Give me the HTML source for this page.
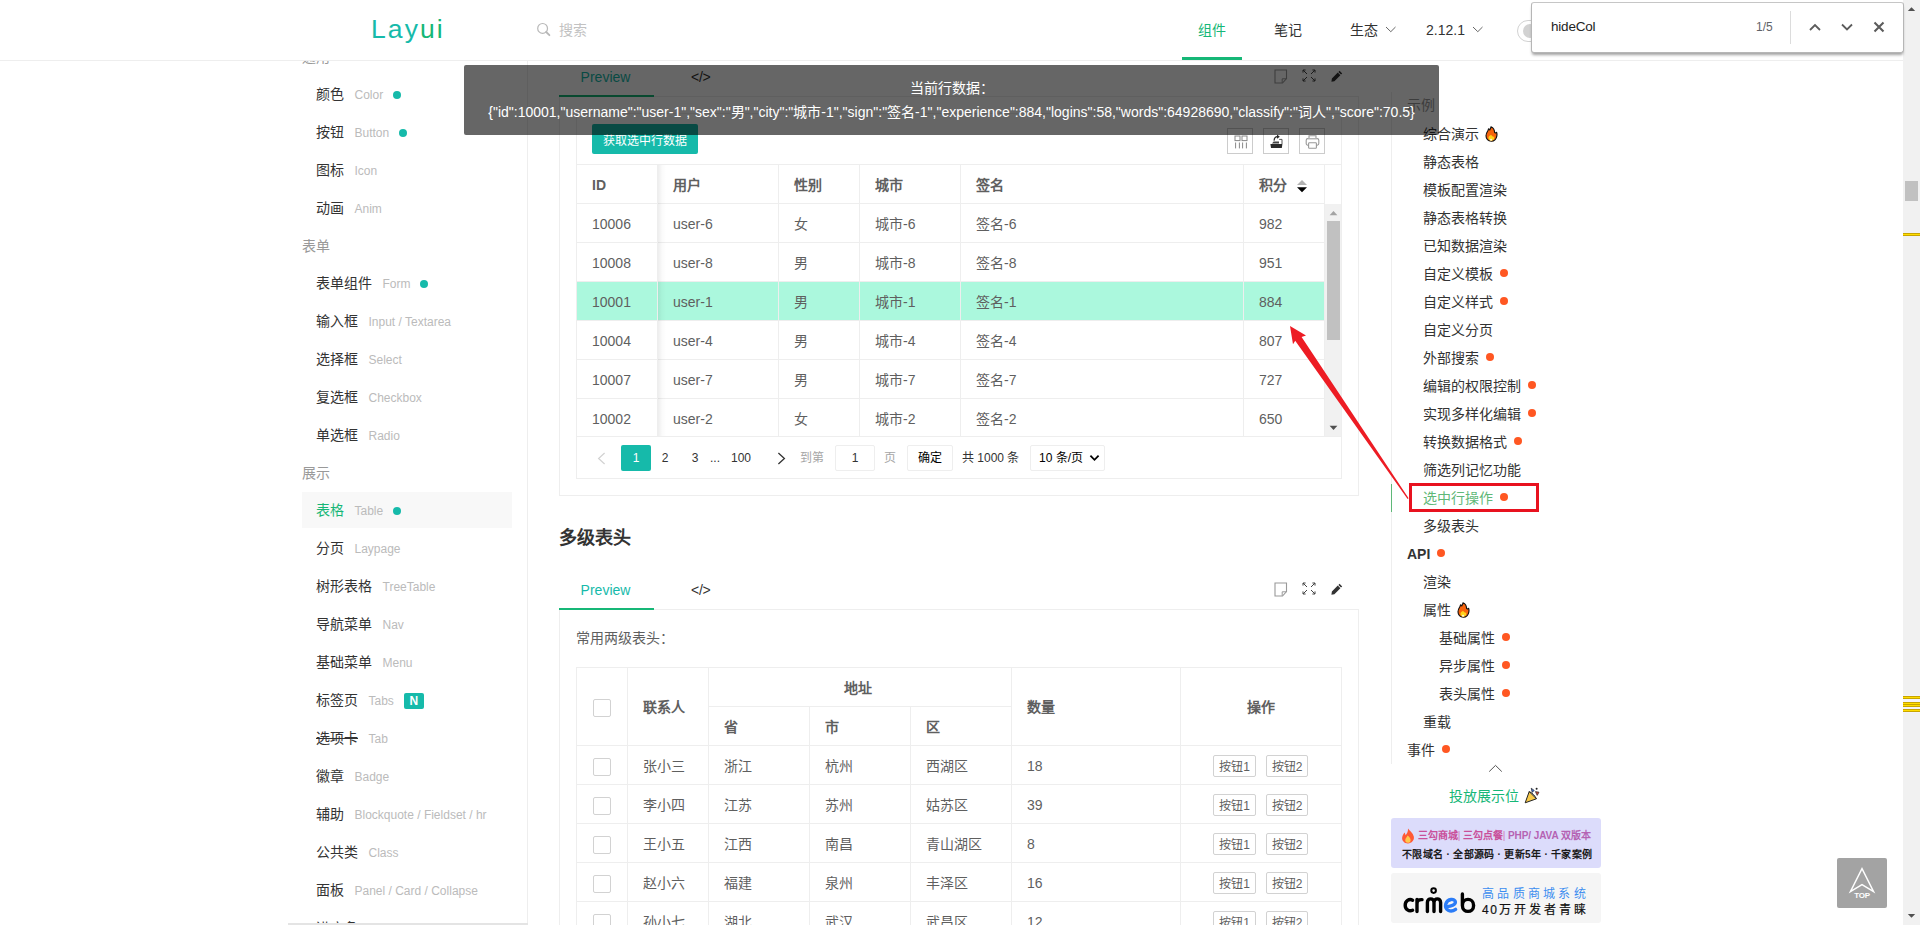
<!DOCTYPE html>
<html lang="zh-CN">
<head>
<meta charset="utf-8">
<title>Layui table</title>
<style>
*{box-sizing:border-box;margin:0;padding:0}
html,body{width:1920px;height:925px;overflow:hidden;background:#fff}
body{font-family:"Liberation Sans",sans-serif;font-size:14px;color:#333;position:relative;line-height:1}
.a{position:absolute}
.nw{white-space:nowrap}
svg{display:block;overflow:visible}

/* header */
#hd{position:absolute;left:0;top:0;width:1903px;height:61px;background:#fff;border-bottom:1px solid #eee;z-index:20}
#logo{position:absolute;left:371px;top:9px;height:40px;line-height:40px;font-size:26.5px;letter-spacing:2.1px;color:#16baaa;white-space:nowrap}
#logo i{font-style:normal;color:#16b777}
.nav{position:absolute;top:0;height:60px;line-height:60px;font-size:14px;color:#333;white-space:nowrap}

/* left side */
#side{position:absolute;left:290px;top:0;width:238px;height:925px;border-right:1px solid #eee;overflow:hidden;z-index:1}
#side .ls{position:absolute;left:12px;top:38px;width:210px}
.lab{height:37px;line-height:39px;color:#999;white-space:nowrap}
.row{height:38px;padding:1px 0}
.row div{height:36px;line-height:36px;padding-left:14px;white-space:nowrap;color:#333}
.row.on div{background:#f8f8f8;color:#16b777}
.row span{font-size:12px;color:#bbb;margin-left:10.5px}
.row b{display:inline-block;width:8px;height:8px;border-radius:50%;background:#16baaa;margin-left:9.5px;vertical-align:middle;position:relative;top:0}
.row em{display:inline-block;font-style:normal;font-weight:bold;font-size:12px;color:#fff;background:#16baaa;width:20px;height:16px;line-height:16px;text-align:center;border-radius:2px;margin-left:10px;vertical-align:middle;position:relative;top:0}
.row s{text-decoration:line-through}

/* page scrollbar */
#sb{position:absolute;left:1903px;top:0;width:17px;height:925px;background:#f1f1f1;z-index:30}
.ym{position:absolute;left:0;width:17px;height:3px;background:#ffdd00;border-top:1px solid #c8a500;border-bottom:1px solid #c8a500}

/* find bar */
#find{position:absolute;left:1531px;top:2px;width:373px;height:51px;background:#fff;border:1px solid #b6b6b6;border-top-color:#c6c6c6;border-radius:3px;box-shadow:0 3px 3px -1px rgba(0,0,0,.37);z-index:40}

/* main */
.card{position:absolute;left:559px;width:800px;border:1px solid #eee}
.tabt{position:absolute;left:558px;width:95px;height:38px;line-height:36px;text-align:center;color:#16baaa;font-size:14px}
.tabu{position:absolute;left:559px;width:95px;height:2px;background:#16b777}
.tabc{position:absolute;left:691px;height:38px;line-height:36px;font-size:14px;color:#333;letter-spacing:-.3px}
.tv{position:absolute;left:576px;width:766px;border:1px solid #eee}
.c{position:absolute;height:38px;line-height:40px;padding-left:15px;white-space:nowrap;color:#5f5f5f;font-size:14px;border-right:1px solid #eee;border-bottom:1px solid #eee;box-sizing:content-box}
.h{font-weight:bold}
.pg{position:absolute;top:0;height:26px;line-height:26px;font-size:12px;color:#333;white-space:nowrap}
.cb{position:absolute;left:16px;width:18px;height:18px;border:1px solid #d2d2d2;border-radius:2px;background:#fff}
.xs{position:absolute;height:22px;line-height:22px;border:1px solid #d2d2d2;border-radius:2px;font-size:12px;color:#5f5f5f;text-align:center;background:#fff;white-space:nowrap}

/* right side */
.ri{position:absolute;height:28px;line-height:28px;white-space:nowrap;color:#333;font-size:14px}
.ri b{display:inline-block;width:8px;height:8px;border-radius:50%;background:#ff5722;margin-left:7px;vertical-align:middle;position:relative;top:-2px}

/* fixed-width CJK runs (keeps following Latin text / dots in place for any fallback font) */
u,s{display:inline-block;white-space:nowrap;text-align:justify;text-align-last:justify}
u{text-decoration:none}
</style>
</head>
<body>

<!-- ============ HEADER ============ -->
<div id="hd">
  <div id="logo">Lay<i>ui</i></div>
  <svg class="a" style="left:536px;top:22px" width="16" height="16" viewBox="0 0 16 16"><circle cx="6.6" cy="6.4" r="4.9" fill="none" stroke="#b8b8b8" stroke-width="1.2"/><path d="M10.2 10 L13.4 13.2" stroke="#b8b8b8" stroke-width="1.8" stroke-linecap="round"/></svg>
  <div class="nav" style="left:559px;color:#c2c2c2"><u style="width:28px">搜索</u></div>

  <div class="nav" style="left:1198px;color:#16b777"><u style="width:28px">组件</u></div>
  <div class="a" style="left:1182px;top:57px;width:60px;height:3px;background:#16b777"></div>
  <div class="nav" style="left:1274px"><u style="width:28px">笔记</u></div>
  <div class="nav" style="left:1350px"><u style="width:28px">生态</u></div>
  <svg class="a" style="left:1385px;top:26px" width="12" height="8" viewBox="0 0 12 8"><path d="M1 1 L5.8 5.7 L10.5 1" fill="none" stroke="#666" stroke-width="1"/></svg>
  <div class="nav" style="left:1426px">2.12.1</div>
  <svg class="a" style="left:1472px;top:26px" width="12" height="8" viewBox="0 0 12 8"><path d="M1 1 L5.8 5.7 L10.5 1" fill="none" stroke="#666" stroke-width="1"/></svg>
  <!-- switch -->
  <div class="a" style="left:1517px;top:20px;width:44px;height:22px;border:1px solid #d2d2d2;border-radius:11px;background:#fff"></div>
  <div class="a" style="left:1523px;top:24px;width:14px;height:14px;border-radius:50%;background:#d2d2d2"></div>
</div>

<!-- ============ FIND BAR ============ -->
<div id="find">
  <div class="a nw" style="left:19px;top:0;height:48px;line-height:48px;font-size:13.5px;letter-spacing:-.2px;color:#222">hideCol</div>
  <div class="a nw" style="left:224px;top:0;height:48px;line-height:48px;font-size:12px;color:#5f6368">1/5</div>
  <div class="a" style="left:258px;top:8px;width:1px;height:33px;background:#dcdcdc"></div>
  <svg class="a" style="left:276px;top:19px" width="14" height="10" viewBox="0 0 14 10"><path d="M2 8 L7 3 L12 8" fill="none" stroke="#5c5c5c" stroke-width="1.8"/></svg>
  <svg class="a" style="left:308px;top:19px" width="14" height="10" viewBox="0 0 14 10"><path d="M2 2.5 L7 7.5 L12 2.5" fill="none" stroke="#5c5c5c" stroke-width="1.8"/></svg>
  <svg class="a" style="left:340px;top:17px" width="14" height="14" viewBox="0 0 14 14"><path d="M2.5 2.5 L11.5 11.5 M11.5 2.5 L2.5 11.5" fill="none" stroke="#5c5c5c" stroke-width="2.1"/></svg>
</div>

<!-- ============ PAGE SCROLLBAR ============ -->
<div id="sb">
  <svg class="a" style="left:4px;top:6px" width="9" height="6" viewBox="0 0 9 6"><path d="M0.8 5 L4.5 1.2 L8.2 5 Z" fill="#505050"/></svg>
  <div class="a" style="left:2px;top:181px;width:13px;height:20px;background:#c1c1c1"></div>
  <div class="ym" style="top:233px"></div>
  <div class="a" style="left:0;top:695px;width:17px;height:18px;background:#f4f4fb"></div>
  <div class="ym" style="top:696px"></div>
  <div class="ym" style="top:702px"></div>
  <div class="ym" style="top:704px"></div>
  <div class="ym" style="top:709px"></div>
  <svg class="a" style="left:4px;top:913px" width="9" height="6" viewBox="0 0 9 6"><path d="M0.8 1 L8.2 1 L4.5 4.8 Z" fill="#505050"/></svg>
</div>

<!-- ============ LEFT SIDEBAR ============ -->
<div id="side">
  <div class="ls">
    <div class="lab"><u style="width:28px">通用</u></div>
    <div class="row"><div><u style="width:28px">颜色</u><span>Color</span><b></b></div></div>
    <div class="row"><div><u style="width:28px">按钮</u><span>Button</span><b></b></div></div>
    <div class="row"><div><u style="width:28px">图标</u><span>Icon</span></div></div>
    <div class="row"><div><u style="width:28px">动画</u><span>Anim</span></div></div>
    <div class="lab"><u style="width:28px">表单</u></div>
    <div class="row"><div><u style="width:56px">表单组件</u><span>Form</span><b></b></div></div>
    <div class="row"><div><u style="width:42px">输入框</u><span>Input / Textarea</span></div></div>
    <div class="row"><div><u style="width:42px">选择框</u><span>Select</span></div></div>
    <div class="row"><div><u style="width:42px">复选框</u><span>Checkbox</span></div></div>
    <div class="row"><div><u style="width:42px">单选框</u><span>Radio</span></div></div>
    <div class="lab"><u style="width:28px">展示</u></div>
    <div class="row on"><div><u style="width:28px">表格</u><span>Table</span><b></b></div></div>
    <div class="row"><div><u style="width:28px">分页</u><span>Laypage</span></div></div>
    <div class="row"><div><u style="width:56px">树形表格</u><span>TreeTable</span></div></div>
    <div class="row"><div><u style="width:56px">导航菜单</u><span>Nav</span></div></div>
    <div class="row"><div><u style="width:56px">基础菜单</u><span>Menu</span></div></div>
    <div class="row"><div><u style="width:42px">标签页</u><span>Tabs</span><em>N</em></div></div>
    <div class="row"><div><s style="width:42px">选项卡</s><span>Tab</span></div></div>
    <div class="row"><div><u style="width:28px">徽章</u><span>Badge</span></div></div>
    <div class="row"><div><u style="width:28px">辅助</u><span>Blockquote / Fieldset / hr</span></div></div>
    <div class="row"><div><u style="width:42px">公共类</u><span>Class</span></div></div>
    <div class="row"><div><u style="width:28px">面板</u><span>Panel / Card / Collapse</span></div></div>
    <div class="row"><div><u style="width:42px">进度条</u><span>Progress</span></div></div>
  </div>
</div>
<div class="a" style="left:288px;top:923px;width:240px;height:2px;background:#e4e4e4;z-index:2"></div>

<!-- ============ MAIN ============ -->
<div id="main">
<div class="card" style="top:96px;height:400px"></div>
<div class="tabt" style="top:59px">Preview</div><div class="tabu" style="top:95px"></div><div class="tabc" style="top:59px">&lt;/&gt;</div>
<svg class="a" style="left:1274px;top:69px" width="14" height="15" viewBox="0 0 14 15"><path d="M1 1 H12.5 V9.5 L8.5 14 H1 Z" fill="none" stroke="#999" stroke-width="1.1"/><path d="M8.2 13.8 V9.8 H12.3" fill="none" stroke="#999" stroke-width="1"/></svg><svg class="a" style="left:1302px;top:69px" width="14" height="13" viewBox="0 0 14 13"><g fill="none" stroke="#444" stroke-width="1"><path d="M1 1 L5 5 M1 3.6 V1 H3.6"/><path d="M13 1 L9 5 M10.4 1 H13 V3.6"/><path d="M1 12 L5 8 M1 9.4 V12 H3.6"/><path d="M13 12 L9 8 M10.4 12 H13 V9.4"/></g></svg><svg class="a" style="left:1331px;top:70px" width="12" height="12" viewBox="0 0 12 12"><path d="M8.6 0.8 L11.2 3.4 L10 4.6 L7.4 2 Z M6.8 2.6 L9.4 5.2 L3.4 11.2 L0.4 11.8 L0.9 8.6 Z" fill="#333"/></svg>
<div class="tv" style="top:113px;height:366px"></div>
<div class="a" style="left:577px;top:164px;width:764px;height:1px;background:#eee"></div>
<div class="a nw" style="left:592px;top:124px;width:106px;height:30px;line-height:34px;background:#16baaa;color:#fff;font-size:12px;text-align:center;border-radius:2px"><u style="width:84px">获取选中行数据</u></div>
<div class="a" style="left:1227px;top:128px;width:26px;height:26px;border:1px solid #ccc"></div>
<div class="a" style="left:1263px;top:128px;width:26px;height:26px;border:1px solid #ccc"></div>
<div class="a" style="left:1299px;top:128px;width:26px;height:26px;border:1px solid #ccc"></div>
<svg class="a" style="left:1234px;top:135px" width="14" height="14" viewBox="0 0 14 14"><g fill="none" stroke="#888" stroke-width="1"><rect x="1" y="1" width="5" height="4.6"/><rect x="8" y="1" width="5" height="4.6"/><path d="M1.6 7.5 V13.4 M5.4 7.5 V13.4 M8.6 7.5 V13.4 M12.4 7.5 V13.4"/></g></svg>
<svg class="a" style="left:1269px;top:134px" width="15" height="15" viewBox="0 0 15 15"><path d="M1.4 10 H13.4 L12.8 14 H2 Z" fill="#2a2a2a"/><path d="M3 9.6 L4.6 7.4 H10 V9.6 Z" fill="#444"/><path d="M10.2 5.4 H13 V10" fill="none" stroke="#555" stroke-width="1"/><path d="M5.2 6.6 C5 4 6.6 2.6 8.6 2.6" fill="none" stroke="#2a2a2a" stroke-width="1.3"/><path d="M8 0.6 L10.8 2.7 L8 4.8 Z" fill="#2a2a2a"/></svg>
<svg class="a" style="left:1305px;top:135px" width="15" height="14" viewBox="0 0 15 14"><g fill="none" stroke="#999" stroke-width="1.1"><path d="M4 3.6 V0.8 H11 V3.6"/><rect x="1.2" y="3.6" width="12.6" height="6.6" rx="1.6"/><rect x="3.6" y="7.8" width="7.8" height="5.4" rx="0.8" fill="#fff"/></g><path d="M3.2 3.7 H11.8" stroke="#bbb" stroke-width="1"/></svg>
<div class="c h" style="left:577px;top:165px;width:65px">ID</div>
<div class="c h" style="left:658px;top:165px;width:105px"><u style="width:28px">用户</u></div>
<div class="c h" style="left:779px;top:165px;width:65px"><u style="width:28px">性别</u></div>
<div class="c h" style="left:860px;top:165px;width:85px"><u style="width:28px">城市</u></div>
<div class="c h" style="left:961px;top:165px;width:267px"><u style="width:28px">签名</u></div>
<div class="c h" style="left:1244px;top:165px;width:65px"><u style="width:28px">积分</u></div>
<svg class="a" style="left:1296px;top:179px" width="12" height="14" viewBox="0 0 12 14"><path d="M1 6 L6 1 L11 6 Z" fill="#b2b2b2"/><path d="M1 8.2 L11 8.2 L6 13.2 Z" fill="#000"/></svg>
<div class="a" style="left:577px;top:204px;width:764px;height:232px;overflow:hidden">
<div class="c" style="left:0px;top:0px;width:65px;">10006</div>
<div class="c" style="left:81px;top:0px;width:105px;">user-6</div>
<div class="c" style="left:202px;top:0px;width:65px;"><u style="width:14px">女</u></div>
<div class="c" style="left:283px;top:0px;width:85px;"><u style="width:28px">城市</u>-6</div>
<div class="c" style="left:384px;top:0px;width:267px;"><u style="width:28px">签名</u>-6</div>
<div class="c" style="left:667px;top:0px;width:65px;">982</div>
<div class="c" style="left:0px;top:39px;width:65px;">10008</div>
<div class="c" style="left:81px;top:39px;width:105px;">user-8</div>
<div class="c" style="left:202px;top:39px;width:65px;"><u style="width:14px">男</u></div>
<div class="c" style="left:283px;top:39px;width:85px;"><u style="width:28px">城市</u>-8</div>
<div class="c" style="left:384px;top:39px;width:267px;"><u style="width:28px">签名</u>-8</div>
<div class="c" style="left:667px;top:39px;width:65px;">951</div>
<div class="c" style="left:0px;top:78px;width:65px;background:#abf8dd;">10001</div>
<div class="c" style="left:81px;top:78px;width:105px;background:#abf8dd;">user-1</div>
<div class="c" style="left:202px;top:78px;width:65px;background:#abf8dd;"><u style="width:14px">男</u></div>
<div class="c" style="left:283px;top:78px;width:85px;background:#abf8dd;"><u style="width:28px">城市</u>-1</div>
<div class="c" style="left:384px;top:78px;width:267px;background:#abf8dd;"><u style="width:28px">签名</u>-1</div>
<div class="c" style="left:667px;top:78px;width:65px;background:#abf8dd;">884</div>
<div class="c" style="left:0px;top:117px;width:65px;">10004</div>
<div class="c" style="left:81px;top:117px;width:105px;">user-4</div>
<div class="c" style="left:202px;top:117px;width:65px;"><u style="width:14px">男</u></div>
<div class="c" style="left:283px;top:117px;width:85px;"><u style="width:28px">城市</u>-4</div>
<div class="c" style="left:384px;top:117px;width:267px;"><u style="width:28px">签名</u>-4</div>
<div class="c" style="left:667px;top:117px;width:65px;">807</div>
<div class="c" style="left:0px;top:156px;width:65px;">10007</div>
<div class="c" style="left:81px;top:156px;width:105px;">user-7</div>
<div class="c" style="left:202px;top:156px;width:65px;"><u style="width:14px">男</u></div>
<div class="c" style="left:283px;top:156px;width:85px;"><u style="width:28px">城市</u>-7</div>
<div class="c" style="left:384px;top:156px;width:267px;"><u style="width:28px">签名</u>-7</div>
<div class="c" style="left:667px;top:156px;width:65px;">727</div>
<div class="c" style="left:0px;top:195px;width:65px;">10002</div>
<div class="c" style="left:81px;top:195px;width:105px;">user-2</div>
<div class="c" style="left:202px;top:195px;width:65px;"><u style="width:14px">女</u></div>
<div class="c" style="left:283px;top:195px;width:85px;"><u style="width:28px">城市</u>-2</div>
<div class="c" style="left:384px;top:195px;width:267px;"><u style="width:28px">签名</u>-2</div>
<div class="c" style="left:667px;top:195px;width:65px;">650</div>
</div>
<div class="a" style="left:658px;top:165px;width:8px;height:271px;background:linear-gradient(to right,rgba(0,0,0,.07),rgba(0,0,0,.02) 50%,rgba(0,0,0,0));pointer-events:none"></div>
<div class="a" style="left:1325px;top:204px;width:16px;height:232px;background:#f1f1f1"></div>
<svg class="a" style="left:1329px;top:210px" width="9" height="6" viewBox="0 0 9 6"><path d="M0.6 5.2 L4.5 1 L8.4 5.2 Z" fill="#a3a3a3"/></svg>
<div class="a" style="left:1327px;top:221px;width:13px;height:119px;background:#c1c1c1"></div>
<svg class="a" style="left:1329px;top:425px" width="9" height="6" viewBox="0 0 9 6"><path d="M0.6 0.8 L8.4 0.8 L4.5 5 Z" fill="#505050"/></svg>
<div class="a" style="left:577px;top:436px;width:764px;height:1px;background:#eee"></div>
<div class="a" style="left:0;top:445px;width:1400px;height:26px">
<svg class="a" style="left:597px;top:7px" width="9" height="13" viewBox="0 0 9 13"><path d="M7.6 1 L1.6 6.5 L7.6 12" fill="none" stroke="#d2d2d2" stroke-width="1.2"/></svg>
<div class="pg" style="left:621px;width:30px;text-align:center;background:#16baaa;color:#fff;border-radius:2px">1</div>
<div class="pg" style="left:650px;width:30px;text-align:center">2</div>
<div class="pg" style="left:680px;width:30px;text-align:center">3</div>
<div class="pg" style="left:710px;color:#333">...</div>
<div class="pg" style="left:731px">100</div>
<svg class="a" style="left:777px;top:7px" width="9" height="13" viewBox="0 0 9 13"><path d="M1.4 1 L7.4 6.5 L1.4 12" fill="none" stroke="#333" stroke-width="1.3"/></svg>
<div class="pg" style="left:800px;color:#a6a6a6"><u style="width:24px">到第</u></div>
<div class="pg" style="left:835px;width:40px;border:1px solid #eee;border-radius:2px;line-height:24px;text-align:center">1</div>
<div class="pg" style="left:884px;color:#a6a6a6"><u style="width:12px">页</u></div>
<div class="pg" style="left:907px;width:46px;border:1px solid #eee;border-radius:2px;line-height:24px;text-align:center;color:#000"><u style="width:24px">确定</u></div>
<div class="pg" style="left:962px"><u style="width:12px">共</u> 1000 <u style="width:12px">条</u></div>
<div class="pg" style="left:1030px;width:75px;border:1px solid #eee;border-radius:2px;line-height:24px;padding-left:8px;color:#000">10 <u style="width:12px">条</u>/<u style="width:12px">页</u></div>
<svg class="a" style="left:1089px;top:9px" width="11" height="8" viewBox="0 0 11 8"><path d="M1.4 1.6 L5.5 5.8 L9.6 1.6" fill="none" stroke="#000" stroke-width="1.8"/></svg>
</div>
<div class="a nw" style="left:559px;top:524px;height:28px;line-height:28px;font-size:18px;font-weight:bold;color:#333"><u style="width:72px">多级表头</u></div>
<div class="card" style="top:609px;height:400px"></div>
<div class="tabt" style="top:572px">Preview</div><div class="tabu" style="top:608px"></div><div class="tabc" style="top:572px">&lt;/&gt;</div>
<svg class="a" style="left:1274px;top:582px" width="14" height="15" viewBox="0 0 14 15"><path d="M1 1 H12.5 V9.5 L8.5 14 H1 Z" fill="none" stroke="#999" stroke-width="1.1"/><path d="M8.2 13.8 V9.8 H12.3" fill="none" stroke="#999" stroke-width="1"/></svg><svg class="a" style="left:1302px;top:582px" width="14" height="13" viewBox="0 0 14 13"><g fill="none" stroke="#444" stroke-width="1"><path d="M1 1 L5 5 M1 3.6 V1 H3.6"/><path d="M13 1 L9 5 M10.4 1 H13 V3.6"/><path d="M1 12 L5 8 M1 9.4 V12 H3.6"/><path d="M13 12 L9 8 M10.4 12 H13 V9.4"/></g></svg><svg class="a" style="left:1331px;top:583px" width="12" height="12" viewBox="0 0 12 12"><path d="M8.6 0.8 L11.2 3.4 L10 4.6 L7.4 2 Z M6.8 2.6 L9.4 5.2 L3.4 11.2 L0.4 11.8 L0.9 8.6 Z" fill="#333"/></svg>
<div class="a nw" style="left:576px;top:626px;height:24px;line-height:24px;color:#5f5f5f"><u style="width:98px">常用两级表头：</u></div>
<div class="tv" style="top:667px;height:300px"></div>
<div class="c" style="left:577px;top:668px;width:35px;height:77px;line-height:79px;padding-left:0;width:50px"></div>
<div class="cb" style="left:593px;top:699px"></div>
<div class="c h" style="left:628px;top:668px;width:65px;height:77px;line-height:79px;"><u style="width:42px">联系人</u></div>
<div class="c h" style="left:709px;top:668px;width:287px;height:38px;line-height:40px;padding-left:0;padding-right:4px;width:298px;text-align:center"><u style="width:28px">地址</u></div>
<div class="c h" style="left:709px;top:707px;width:85px;height:38px;line-height:40px;"><u style="width:14px">省</u></div>
<div class="c h" style="left:810px;top:707px;width:85px;height:38px;line-height:40px;"><u style="width:14px">市</u></div>
<div class="c h" style="left:911px;top:707px;width:85px;height:38px;line-height:40px;"><u style="width:14px">区</u></div>
<div class="c h" style="left:1012px;top:668px;width:153px;height:77px;line-height:79px;"><u style="width:28px">数量</u></div>
<div class="c h" style="left:1181px;top:668px;width:145px;height:77px;line-height:79px;padding-left:0;width:160px;text-align:center;border-right:0"><u style="width:28px">操作</u></div>
<div class="c" style="left:577px;top:746px;width:35px;height:38px;line-height:40px;padding-left:0;width:50px"></div>
<div class="cb" style="left:593px;top:758px"></div>
<div class="c" style="left:628px;top:746px;width:65px;height:38px;line-height:40px;"><u style="width:42px">张小三</u></div>
<div class="c" style="left:709px;top:746px;width:85px;height:38px;line-height:40px;"><u style="width:28px">浙江</u></div>
<div class="c" style="left:810px;top:746px;width:85px;height:38px;line-height:40px;"><u style="width:28px">杭州</u></div>
<div class="c" style="left:911px;top:746px;width:85px;height:38px;line-height:40px;"><u style="width:42px">西湖区</u></div>
<div class="c" style="left:1012px;top:746px;width:153px;height:38px;line-height:40px;">18</div>
<div class="c" style="left:1181px;top:746px;width:145px;height:38px;line-height:40px;padding-left:0;width:160px;border-right:0"></div>
<div class="xs" style="left:1213px;top:755px;width:43px"><u style="width:24px">按钮</u>1</div><div class="xs" style="left:1266px;top:755px;width:42px"><u style="width:24px">按钮</u>2</div>
<div class="c" style="left:577px;top:785px;width:35px;height:38px;line-height:40px;padding-left:0;width:50px"></div>
<div class="cb" style="left:593px;top:797px"></div>
<div class="c" style="left:628px;top:785px;width:65px;height:38px;line-height:40px;"><u style="width:42px">李小四</u></div>
<div class="c" style="left:709px;top:785px;width:85px;height:38px;line-height:40px;"><u style="width:28px">江苏</u></div>
<div class="c" style="left:810px;top:785px;width:85px;height:38px;line-height:40px;"><u style="width:28px">苏州</u></div>
<div class="c" style="left:911px;top:785px;width:85px;height:38px;line-height:40px;"><u style="width:42px">姑苏区</u></div>
<div class="c" style="left:1012px;top:785px;width:153px;height:38px;line-height:40px;">39</div>
<div class="c" style="left:1181px;top:785px;width:145px;height:38px;line-height:40px;padding-left:0;width:160px;border-right:0"></div>
<div class="xs" style="left:1213px;top:794px;width:43px"><u style="width:24px">按钮</u>1</div><div class="xs" style="left:1266px;top:794px;width:42px"><u style="width:24px">按钮</u>2</div>
<div class="c" style="left:577px;top:824px;width:35px;height:38px;line-height:40px;padding-left:0;width:50px"></div>
<div class="cb" style="left:593px;top:836px"></div>
<div class="c" style="left:628px;top:824px;width:65px;height:38px;line-height:40px;"><u style="width:42px">王小五</u></div>
<div class="c" style="left:709px;top:824px;width:85px;height:38px;line-height:40px;"><u style="width:28px">江西</u></div>
<div class="c" style="left:810px;top:824px;width:85px;height:38px;line-height:40px;"><u style="width:28px">南昌</u></div>
<div class="c" style="left:911px;top:824px;width:85px;height:38px;line-height:40px;"><u style="width:56px">青山湖区</u></div>
<div class="c" style="left:1012px;top:824px;width:153px;height:38px;line-height:40px;">8</div>
<div class="c" style="left:1181px;top:824px;width:145px;height:38px;line-height:40px;padding-left:0;width:160px;border-right:0"></div>
<div class="xs" style="left:1213px;top:833px;width:43px"><u style="width:24px">按钮</u>1</div><div class="xs" style="left:1266px;top:833px;width:42px"><u style="width:24px">按钮</u>2</div>
<div class="c" style="left:577px;top:863px;width:35px;height:38px;line-height:40px;padding-left:0;width:50px"></div>
<div class="cb" style="left:593px;top:875px"></div>
<div class="c" style="left:628px;top:863px;width:65px;height:38px;line-height:40px;"><u style="width:42px">赵小六</u></div>
<div class="c" style="left:709px;top:863px;width:85px;height:38px;line-height:40px;"><u style="width:28px">福建</u></div>
<div class="c" style="left:810px;top:863px;width:85px;height:38px;line-height:40px;"><u style="width:28px">泉州</u></div>
<div class="c" style="left:911px;top:863px;width:85px;height:38px;line-height:40px;"><u style="width:42px">丰泽区</u></div>
<div class="c" style="left:1012px;top:863px;width:153px;height:38px;line-height:40px;">16</div>
<div class="c" style="left:1181px;top:863px;width:145px;height:38px;line-height:40px;padding-left:0;width:160px;border-right:0"></div>
<div class="xs" style="left:1213px;top:872px;width:43px"><u style="width:24px">按钮</u>1</div><div class="xs" style="left:1266px;top:872px;width:42px"><u style="width:24px">按钮</u>2</div>
<div class="c" style="left:577px;top:902px;width:35px;height:38px;line-height:40px;padding-left:0;width:50px"></div>
<div class="cb" style="left:593px;top:914px"></div>
<div class="c" style="left:628px;top:902px;width:65px;height:38px;line-height:40px;"><u style="width:42px">孙小七</u></div>
<div class="c" style="left:709px;top:902px;width:85px;height:38px;line-height:40px;"><u style="width:28px">湖北</u></div>
<div class="c" style="left:810px;top:902px;width:85px;height:38px;line-height:40px;"><u style="width:28px">武汉</u></div>
<div class="c" style="left:911px;top:902px;width:85px;height:38px;line-height:40px;"><u style="width:42px">武昌区</u></div>
<div class="c" style="left:1012px;top:902px;width:153px;height:38px;line-height:40px;">12</div>
<div class="c" style="left:1181px;top:902px;width:145px;height:38px;line-height:40px;padding-left:0;width:160px;border-right:0"></div>
<div class="xs" style="left:1213px;top:911px;width:43px"><u style="width:24px">按钮</u>1</div><div class="xs" style="left:1266px;top:911px;width:42px"><u style="width:24px">按钮</u>2</div>
</div>


<!-- ============ RIGHT ============ -->
<div id="right">
<div class="a" style="left:1391px;top:92px;width:1px;height:672px;background:#eee"></div>
<div class="ri" style="left:1407px;top:91px;color:#999"><u style="width:28px">示例</u></div>
<div class="ri" style="left:1423px;top:120px;"><u style="width:56px">综合演示</u></div>
<svg class="a" style="left:1484.7px;top:126.2px" width="12.7" height="16.3" viewBox="0 0 14 18"><path d="M6.6 0.9 C8 1.4 9 2.3 9.6 3.4 C10.2 4.5 10.5 5.6 10.7 7.3 C11.3 7.9 12.2 7.6 12.8 6.9 C13.3 8.2 13.4 9.6 13.1 11 C12.7 13.6 10.6 16.9 6.9 16.9 C3.4 16.9 1.1 14.2 1.1 10.9 C1.1 8.6 2.1 6.8 3.1 5.2 C3.5 4.5 3.8 3.9 3.9 3.1 C4.5 3.3 5 3.8 5.3 4.4 C5.9 3.4 6.5 2.3 6.6 0.9 Z" fill="#f7630c" stroke="#111" stroke-width="1.25" stroke-linejoin="round"/><path d="M6.5 9.6 C7.6 10.6 8.4 11.4 9 12 C9.5 11.8 9.8 11.5 10 11.2 C10.6 12.6 10.2 14.4 9.2 15.4 C8.6 16 7.8 16.3 6.9 16.3 C5.2 16.3 3.9 15.2 3.8 13.6 C3.7 12.2 4.6 11.2 5.4 10.6 C5.9 10.3 6.3 10 6.5 9.6 Z" fill="#ffd21a"/><ellipse cx="6.7" cy="15.1" rx="1.2" ry="1.1" fill="#fff8d8"/></svg>
<div class="ri" style="left:1423px;top:148px;"><u style="width:56px">静态表格</u></div>
<div class="ri" style="left:1423px;top:176px;"><u style="width:84px">模板配置渲染</u></div>
<div class="ri" style="left:1423px;top:204px;"><u style="width:84px">静态表格转换</u></div>
<div class="ri" style="left:1423px;top:232px;"><u style="width:84px">已知数据渲染</u></div>
<div class="ri" style="left:1423px;top:260px;"><u style="width:70px">自定义模板</u><b></b></div>
<div class="ri" style="left:1423px;top:288px;"><u style="width:70px">自定义样式</u><b></b></div>
<div class="ri" style="left:1423px;top:316px;"><u style="width:70px">自定义分页</u></div>
<div class="ri" style="left:1423px;top:344px;"><u style="width:56px">外部搜索</u><b></b></div>
<div class="ri" style="left:1423px;top:372px;"><u style="width:98px">编辑的权限控制</u><b></b></div>
<div class="ri" style="left:1423px;top:400px;"><u style="width:98px">实现多样化编辑</u><b></b></div>
<div class="ri" style="left:1423px;top:428px;"><u style="width:84px">转换数据格式</u><b></b></div>
<div class="ri" style="left:1423px;top:456px;"><u style="width:98px">筛选列记忆功能</u></div>
<div class="ri" style="left:1423px;top:484px;color:#5fb878;"><u style="width:70px">选中行操作</u><b></b></div>
<div class="ri" style="left:1423px;top:512px;"><u style="width:56px">多级表头</u></div>
<div class="ri" style="left:1407px;top:540px;font-weight:bold;">API<b></b></div>
<div class="ri" style="left:1423px;top:568px;"><u style="width:28px">渲染</u></div>
<div class="ri" style="left:1423px;top:596px;"><u style="width:28px">属性</u></div>
<svg class="a" style="left:1456.7px;top:602.2px" width="12.7" height="16.3" viewBox="0 0 14 18"><path d="M6.6 0.9 C8 1.4 9 2.3 9.6 3.4 C10.2 4.5 10.5 5.6 10.7 7.3 C11.3 7.9 12.2 7.6 12.8 6.9 C13.3 8.2 13.4 9.6 13.1 11 C12.7 13.6 10.6 16.9 6.9 16.9 C3.4 16.9 1.1 14.2 1.1 10.9 C1.1 8.6 2.1 6.8 3.1 5.2 C3.5 4.5 3.8 3.9 3.9 3.1 C4.5 3.3 5 3.8 5.3 4.4 C5.9 3.4 6.5 2.3 6.6 0.9 Z" fill="#f7630c" stroke="#111" stroke-width="1.25" stroke-linejoin="round"/><path d="M6.5 9.6 C7.6 10.6 8.4 11.4 9 12 C9.5 11.8 9.8 11.5 10 11.2 C10.6 12.6 10.2 14.4 9.2 15.4 C8.6 16 7.8 16.3 6.9 16.3 C5.2 16.3 3.9 15.2 3.8 13.6 C3.7 12.2 4.6 11.2 5.4 10.6 C5.9 10.3 6.3 10 6.5 9.6 Z" fill="#ffd21a"/><ellipse cx="6.7" cy="15.1" rx="1.2" ry="1.1" fill="#fff8d8"/></svg>
<div class="ri" style="left:1439px;top:624px;"><u style="width:56px">基础属性</u><b></b></div>
<div class="ri" style="left:1439px;top:652px;"><u style="width:56px">异步属性</u><b></b></div>
<div class="ri" style="left:1439px;top:680px;"><u style="width:56px">表头属性</u><b></b></div>
<div class="ri" style="left:1423px;top:708px;"><u style="width:28px">重载</u></div>
<div class="ri" style="left:1407px;top:736px;"><u style="width:28px">事件</u><b></b></div>
<div class="a" style="left:1391px;top:484px;width:1px;height:28px;background:#5fb878"></div>
<svg class="a" style="left:1488px;top:764px" width="15" height="9" viewBox="0 0 15 9"><path d="M1.2 7.6 L7.5 1.4 L13.8 7.6" fill="none" stroke="#555" stroke-width="1"/></svg>
<div class="ri" style="left:1449px;top:782px;color:#16b777"><u style="width:70px">投放展示位</u></div>
<svg class="a" style="left:1524px;top:787px" width="17" height="17" viewBox="0 0 17 17"><path d="M1.2 15.8 L5.2 4.6 L12.4 11.8 Z" fill="#f7c948" stroke="#222" stroke-width="1" stroke-linejoin="round"/><path d="M5.2 4.6 C8 5.6 11 8.6 12.4 11.8" fill="none" stroke="#222" stroke-width="1"/><path d="M7.2 1.2 L10.2 3.4 L8.2 5.4 Z" fill="#3b6fd4" stroke="#222" stroke-width=".7"/><path d="M11.4 4.6 L15 5.2 L13.2 8.4 Z" fill="#d44a3b" stroke="#222" stroke-width=".7"/><circle cx="12.6" cy="1.8" r="1" fill="#222"/></svg>
<div class="a" style="left:1391px;top:818px;width:210px;height:50px;background:#dcdcfb;border-radius:3px"></div>
<svg class="a" style="left:1401px;top:828px" width="14" height="16" viewBox="0 0 14 16"><path d="M7 0.6 C8.6 3 12 5 12.8 8.6 C13.6 12.4 10.6 15.4 7 15.4 C3.4 15.4 0.6 12.6 1.2 9.2 C1.6 7.2 2.8 6 3.4 4.6 C4.2 5.6 4.4 6.4 4.6 7.2 C6.2 5.4 7.2 3.4 7 0.6 Z" fill="#ff5a36"/><path d="M7 14.8 C4.8 14.8 3.8 13 4.4 11.2 C4.8 10 6 9 6.6 7.6 C8.2 9 9.8 10.6 9.6 12.4 C9.4 14 8.4 14.8 7 14.8 Z" fill="#ffc94d"/></svg>
<div class="a nw" style="left:1418px;top:829px;height:14px;line-height:14px;font-size:10px;font-weight:bold;color:#c9509a;letter-spacing:-.07px">三勾商城<span style="font-weight:normal;opacity:.7">|</span> 三勾点餐<span style="font-weight:normal;opacity:.7">|</span> <span style="color:#b563b3">PHP/ JAVA 双版本</span></div>
<div class="a nw" style="left:1402px;top:847.5px;height:14px;line-height:14px;font-size:10px;font-weight:bold;color:#1a1a1a;letter-spacing:.33px">不限域名 · 全部源码 · 更新5年 · 千家案例</div>
<div class="a" style="left:1391px;top:873px;width:210px;height:50px;background:#f5f5f5;border-radius:3px"></div>
<svg class="a" style="left:1403px;top:887.2px" width="74" height="30" viewBox="0 0 74 30"><g fill="none" stroke="#000" stroke-width="3.4" stroke-linecap="round"><path d="M9.6 13.2 C6 11.4 2.2 14 2.2 18.2 C2.2 22.4 6 25 9.6 23.2"/><path d="M14 12.4 V24.6 M14 17 C14 13.6 16 12.4 19 12.6"/><path d="M24.4 24.6 V15.6 C24.4 10.6 31 10.6 31 15.6 V24.6 M31 15.6 C31 10.6 37.6 10.6 37.6 15.6 V24.6"/><path d="M59.4 7 V18.4 M59.4 18.4 C59.4 10.4 70.6 10.4 70.6 18.4 C70.6 26.4 59.4 26.4 59.4 18.4"/></g><circle cx="30.6" cy="3.6" r="2.3" fill="none" stroke="#000" stroke-width="2"/><path d="M43.6 19.6 C48 19.8 52.6 17.6 52.4 14.8 C52.2 11.4 44.4 11.2 42.8 17 C41.2 23 47.6 26 52.6 22.4" fill="none" stroke="#2b7cf7" stroke-width="3.4" stroke-linecap="round"/></svg>
<div class="a nw" style="left:1482px;top:886.5px;height:15px;line-height:15px;font-size:12px;color:#3c8df0;letter-spacing:3.25px">高品质商城系统</div>
<div class="a nw" style="left:1482px;top:903px;height:15px;line-height:15px;font-size:12px;color:#111;letter-spacing:1.6px;-webkit-text-stroke:.2px #111">40<span style="letter-spacing:3.1px">万开发者青睐</span></div>
<div class="a" style="left:1837px;top:858px;width:50px;height:50px;background:#a3a3a3;border-radius:2px"></div>
<svg class="a" style="left:1837px;top:858px" width="50" height="50" viewBox="0 0 50 50"><path d="M25 10.6 L36.6 33.6 L25 26.6 L13.4 33.6 Z" fill="none" stroke="#fff" stroke-width="1.4" stroke-linejoin="miter"/></svg>
<div class="a nw" style="left:1837px;top:892px;width:50px;height:8px;line-height:8px;font-size:8px;font-weight:bold;color:#fff;text-align:center;letter-spacing:-.2px">TOP</div>
</div>


<!-- ============ OVERLAY ============ -->
<div class="a" style="left:464px;top:65px;width:975px;height:70px;background:rgba(0,0,0,.6);border-radius:2px;z-index:15;color:#fff;text-align:center;font-size:14px;line-height:24px;padding-top:11px;white-space:nowrap"><u style="width:84px">当前行数据：</u><br>{"id":10001,"username":"user-1","sex":"<u style="width:14px">男</u>","city":"<u style="width:28px">城市</u>-1","sign":"<u style="width:28px">签名</u>-1","experience":884,"logins":58,"words":64928690,"classify":"<u style="width:28px">词人</u>","score":70.5}</div>
<div class="a" style="left:1409px;top:483px;width:130px;height:29px;border:3px solid #e8121f;z-index:16"></div>
<svg class="a" style="left:0;top:0;z-index:16;pointer-events:none" width="1920" height="925" viewBox="0 0 1920 925"><path d="M1290 326 L1306 335.5 L1301.6 336.9 L1408.6 498.2 L1407.6 499 L1295.2 340.8 L1293 344.3 Z" fill="#ed1c24"/></svg>


</body>
</html>
